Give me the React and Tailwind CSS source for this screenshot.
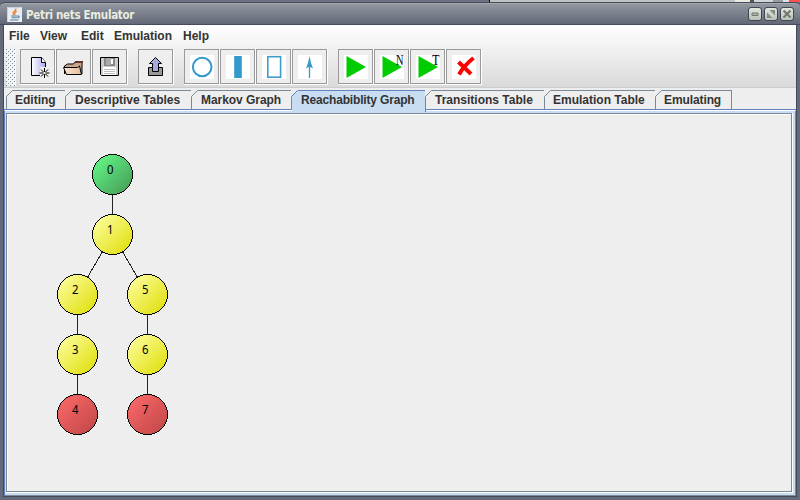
import React from 'react';

const MENUS = [
  ['File', 'w-[31px]'],
  ['View', 'w-[41px]'],
  ['Edit', 'w-[33px]'],
  ['Emulation', 'w-[69px]'],
  ['Help', 'w-[40px]'],
];

const TABS = [
  ['Editing', 'w-[60px]', ''],
  ['Descriptive Tables', 'w-[126px]', ''],
  ['Markov Graph', 'w-[100px]', 'tracking-[-0.05px]'],
  ['Reachabiblity Graph', 'w-[134px]', 'tracking-[-0.17px]'],
  ['Transitions Table', 'w-[119px]', ''],
  ['Emulation Table', 'w-[111px]', '-ml-px'],
  ['Emulating', 'w-[76px]', '-ml-px tracking-[-0.1px]'],
];

const NODES = [
  { id: '0', x: 112.5, y: 174.5, fill: 'url(#green)' },
  { id: '1', x: 112.5, y: 234.5, fill: 'url(#yellow)' },
  { id: '2', x: 77.5, y: 294.5, fill: 'url(#yellow)' },
  { id: '5', x: 147.5, y: 294.5, fill: 'url(#yellow)' },
  { id: '3', x: 77.5, y: 354.5, fill: 'url(#yellow)' },
  { id: '6', x: 147.5, y: 354.5, fill: 'url(#yellow)' },
  { id: '4', x: 77.5, y: 414.5, fill: 'url(#red)' },
  { id: '7', x: 147.5, y: 414.5, fill: 'url(#red)' },
];

const EDGES = [
  [112.5, 174.5, 112.5, 234.5],
  [112.5, 234.5, 77.5, 294.5],
  [112.5, 234.5, 147.5, 294.5],
  [77.5, 294.5, 77.5, 414.5],
  [147.5, 294.5, 147.5, 414.5],
];

function JavaIcon() {
  return (
    <svg width="15" height="15" viewBox="0 0 15 15" className="shrink-0">
      <rect width="15" height="15" fill="#e9edf0" />
      <path d="M.5 14.5V.5h14" fill="none" stroke="#c5d4e0" />
      <path d="M8.8 1.5C9.5 4 5 4.6 6.2 6.6L7.2 8M9.8 4.2C7.5 5.2 7.2 6 8.3 7.6" fill="none" stroke="#ed8434" strokeWidth="1.4" />
      <path d="M4 9h6.5M4.8 10.8h5M3 13h8.5M10.5 9.2c2.5-.8 2 1.4 0 1.7" fill="none" stroke="#5382a1" strokeWidth="1.1" />
    </svg>
  );
}

function WindowButton({ children }) {
  return (
    <div className="h-[14px] w-[14px] rounded-[3px] border border-[#3f4654] bg-gradient-to-b from-[#e3e7df] to-[#bcc2b7]">
      <svg width="12" height="12" viewBox="0 0 12 12" className="block">{children}</svg>
    </div>
  );
}

function ToolButton({ children }) {
  return (
    <div className="flex h-[36px] w-[36px] items-start border-r border-b border-white">
      <div className="h-[35px] w-[35px] border border-[#999] bg-[#eee]">
        <svg width="33" height="33" viewBox="1 1 33 33" className="block">{children}</svg>
      </div>
    </div>
  );
}

const Plate = () => <rect x="6" y="6" width="24" height="24" fill="#fff" />;
const Play = () => <path d="M8.500 7v22l19.500-11z" fill="#00cc00" />;

function Toolbar() {
  return (
    <div className="flex h-[41px] items-start pl-[2px] pt-[2px]">
      <svg width="10" height="37" className="mr-[2px] shrink-0">
        <defs>
          <pattern id="grip" width="4" height="4" patternUnits="userSpaceOnUse">
            <rect width="4" height="4" fill="#f4f4f4" />
            <rect width="1" height="1" fill="#7a8a99" />
            <rect x="2" y="2" width="1" height="1" fill="#7a8a99" />
            <rect x="1" y="1" width="1" height="1" fill="#fff" />
            <rect x="3" y="3" width="1" height="1" fill="#fff" />
          </pattern>
        </defs>
        <rect width="10" height="37" fill="url(#grip)" />
      </svg>
      <div className="flex gap-[10px] pl-[2px]">
        <div className="flex">
          <ToolButton>
            <path d="M11.5 8.5h10l4 5v13h-14z" fill="url(#page)" stroke="#000" />
            <path d="M21.5 8.5v5h4" fill="#fff" stroke="#000" />
            <path d="M20 18h9v10h-9z" fill="#eee" />
            <path d="M24.5 19v10M19.5 24h10M21 20.5l7 7M28 20.5l-7 7" stroke="#000" strokeWidth="1" />
            <rect x="23.5" y="23" width="2" height="2" fill="#fff" />
          </ToolButton>
          <ToolButton>
            <path d="M8.500 25v-8l3-2h6l2-2.500h6.500V25" fill="#c9a78c" stroke="#000" />
            <path d="M19 13h8" stroke="#663333" strokeWidth="2" />
            <path d="M7.500 18.500h14l2-1.500 2 8.500h-15z" fill="url(#folder)" stroke="#000" />
          </ToolButton>
          <ToolButton>
            <path d="M8.500 8.500h18v18h-17l-1-1z" fill="#ccc" stroke="#000" />
            <rect x="12" y="9" width="11" height="8" fill="#888" />
            <rect x="14" y="9" width="5" height="7" fill="#aaa" />
            <rect x="19" y="10" width="2" height="5" fill="#fff" />
            <rect x="11" y="18" width="13" height="8" fill="#fff" />
            <path d="M12 20.500h11M12 22.500h11M12 24.500h11" stroke="#bbb" />
          </ToolButton>
        </div>
        <div className="flex">
          <ToolButton>
            <path d="M10.500 18.500h14v8h-14z" fill="#999" stroke="#000" />
            <path d="M17.500 8.500l6 6h-3v8h-6v-8h-3z" fill="#a9a9df" stroke="#000" />
          </ToolButton>
        </div>
        <div className="flex">
          <ToolButton>
            <Plate />
            <circle cx="18.200" cy="18" r="9.300" fill="none" stroke="#3399cc" strokeWidth="2" />
          </ToolButton>
          <ToolButton>
            <Plate />
            <rect x="14.200" y="7" width="7.600" height="22" fill="#3399cc" />
          </ToolButton>
          <ToolButton>
            <Plate />
            <rect x="11.800" y="7.700" width="12.800" height="20.500" fill="none" stroke="#3d9dcd" strokeWidth="1.600" />
          </ToolButton>
          <ToolButton>
            <Plate />
            <path d="M17.500 17v12" stroke="#3399cc" strokeWidth="1.300" />
            <path d="M17.500 7l1.500 7 2 5.500-3.500-2-3.500 2 2-5.500z" fill="#3399cc" />
          </ToolButton>
        </div>
        <div className="flex">
          <ToolButton><Plate /><Play /></ToolButton>
          <ToolButton>
            <Plate /><Play />
            <text x="22" y="16" textLength="7.500" lengthAdjust="spacingAndGlyphs" fontSize="14" fontFamily="Liberation Serif, serif" fill="#000">N</text>
          </ToolButton>
          <ToolButton>
            <Plate /><Play />
            <text x="22" y="16" textLength="7.500" lengthAdjust="spacingAndGlyphs" fontSize="14" fontFamily="Liberation Serif, serif" fill="#000">T</text>
          </ToolButton>
          <ToolButton>
            <Plate />
            <path d="M12.500 13L25 25M27.500 9Q18 16.500 13 25.500" fill="none" stroke="#ff0000" strokeWidth="4" />
          </ToolButton>
        </div>
      </div>
    </div>
  );
}

function Tab({ label, width, extra, active, first }) {
  return (
    <div
      className={
        'relative flex shrink-0 ' + width + ' ' +
        (first ? 'pl-[8px] border-l ' : 'pl-[9px] ') +
        (active ? 'h-[22px] border-t border-r border-[#6382bf] bg-[#c8ddf2]' : 'h-[19px] border-t border-r border-[#7a8a99] bg-[#eee]')
      }
    >
      <svg width="7" height="7" className="absolute -top-px -left-px">
        <path d="M0 0h7L0 7z" fill="#eee" />
        <path d="M.5 6.500l6-6" stroke={active ? '#6382bf' : '#7a8a99'} fill="none" />
      </svg>
      <span className={'mt-[1px] text-[12px] leading-[16px] font-bold whitespace-nowrap ' + extra}>{label}</span>
    </div>
  );
}

function Graph() {
  return (
    <svg width="784" height="376" viewBox="7 114 784 376" className="block">
      <defs>
        <linearGradient id="green" x1="0" y1="0" x2="1" y2="1">
          <stop stopColor="#66ff8c" /><stop offset="1" stopColor="#439653" />
        </linearGradient>
        <linearGradient id="yellow" x1="0" y1="0" x2="1" y2="1">
          <stop stopColor="#ffffaa" /><stop offset="1" stopColor="#dddd00" />
        </linearGradient>
        <linearGradient id="red" x1="0" y1="0" x2="1" y2="1">
          <stop stopColor="#ff6b6b" /><stop offset="1" stopColor="#bd4545" />
        </linearGradient>
        <linearGradient id="page"><stop stopColor="#fff" /><stop offset="1" stopColor="#a9a9ef" /></linearGradient>
        <linearGradient id="folder"><stop stopColor="#fbe8d8" /><stop offset="1" stopColor="#e5bb96" /></linearGradient>
      </defs>
      {EDGES.map(([a, b, c, d]) => (
        <line key={a + '-' + b + '-' + c} x1={a} y1={b} x2={c} y2={d} stroke="#222" shapeRendering="crispEdges" />
      ))}
      {NODES.map((n) => (
        <g key={n.id}>
          <circle cx={n.x} cy={n.y} r="20" fill={n.fill} stroke="#000" shapeRendering="crispEdges" />
          <text x={n.x - 5.500} y={n.y - 0.500} fontSize="12" textLength="6.500" lengthAdjust="spacingAndGlyphs" fontFamily="Noto Sans, sans-serif" fill="#000">{n.id}</text>
        </g>
      ))}
    </svg>
  );
}

export default function App() {
  return (
    <div className="flex h-[500px] w-[800px] flex-col overflow-hidden bg-[#646a79] font-['Liberation_Sans',Arial,sans-serif] text-[#333]">
      <div className="flex h-[2px] shrink-0">
        <div className="w-[489px] bg-[#6b7180]" />
        <div className="w-px bg-black" />
        <div className="w-[245px] bg-[#bfc2c2]" />
        <div className="w-[15px] bg-[#e9ecdf]" />
        <div className="w-[4px] bg-[#555]" />
        <div className="w-[19px] bg-[#d3d6d8]" />
        <div className="w-[10px] bg-[#9a9da0]" />
        <div className="w-[6px] bg-[#dfe3e6]" />
        <div className="w-[11px] bg-[#ff5050]" />
      </div>
      <div className="flex h-[23px] shrink-0 items-center rounded-t-[5px] border-t border-b border-[#454b5a] bg-gradient-to-b from-[#9499a1] to-[#626877] pt-px pr-[6px] pl-[7px] shadow-[inset_0_1px_#a4a8ae]">
        <JavaIcon />
        <span className="mt-[2px] ml-[4px] flex-1 font-['DejaVu_Sans_Condensed','DejaVu_Sans',sans-serif] text-[11.5px] leading-[16px] font-bold tracking-[-0.3px] text-[#e9ecdf]">Petri nets Emulator</span>
        <div className="flex gap-[2px]">
          <WindowButton><path d="M3 5h6v2.500h-6z" fill="#aeb3aa" stroke="#737970" /></WindowButton>
          <WindowButton><path d="M4.500 2H10v5.500zM2 4.500V10h5.500z" fill="#858b82" /></WindowButton>
          <WindowButton><path d="M2.500 2.500l7 7M9.500 2.500l-7 7" stroke="#747a71" strokeWidth="2.200" /></WindowButton>
        </div>
      </div>
      <div className="flex min-h-0 flex-1 border-r-[3px] border-b-[3px] border-l-[3px] border-[#646a79]">
        <div className="flex flex-1 flex-col border-r border-b border-l border-[#444a59] bg-[#eee]">
          <div className="flex h-[63px] shrink-0 flex-col border-b border-[#ccc] bg-gradient-to-b from-white to-[#dadada]">
            <div className="flex h-[22px] pt-[3px] pl-[5px]">
              {MENUS.map(([label, width]) => (
                <span key={label} className={'shrink-0 text-[12px] leading-[17px] font-bold ' + width}>{label}</span>
              ))}
            </div>
            <Toolbar />
          </div>
          <div className="flex h-[22px] shrink-0 items-start border-b border-[#6382bf] pt-[2px] pl-[2px]">
            {TABS.map(([label, width, extra], i) => (
              <Tab key={label} label={label} width={width} extra={extra} active={i === 3} first={i === 0} />
            ))}
          </div>
          <div className="flex min-h-0 flex-1 border border-t-white border-r-[#7a8a99] border-b-[#7a8a99] border-l-[#6382bf]">
            <div className="flex-1 border-t-2 border-r-2 border-b-2 border-l border-[#c8ddf2]">
              <div className="h-full border-r border-b border-white">
                <div className="h-full border border-[#7a8a99] shadow-[inset_1px_1px_#fff]">
                  <Graph />
                </div>
              </div>
            </div>
          </div>
        </div>
      </div>
    </div>
  );
}
